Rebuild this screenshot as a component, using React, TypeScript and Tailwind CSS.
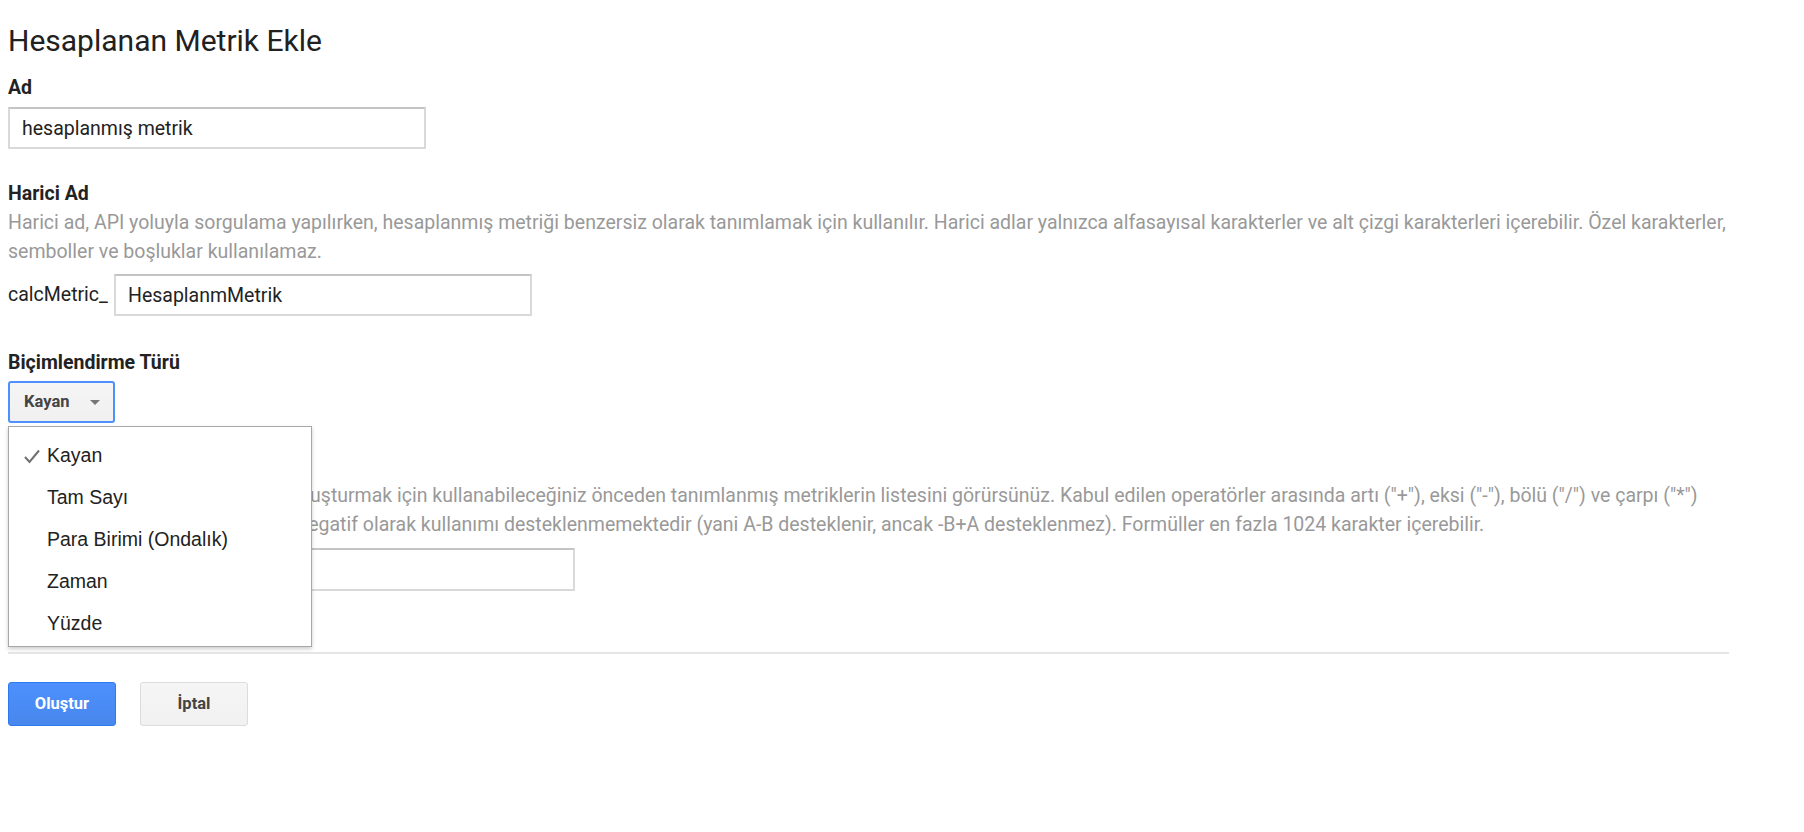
import React from "react";

const labelCls = "block text-[19.5px] leading-[29px] font-bold text-[#222]";
const helpCls = "text-[19.5px] leading-[29px] text-[#999] whitespace-nowrap";
const inputCls =
  "h-[42px] border-2 border-[#d9d9d9] border-t-[#c4c4c4] bg-white px-[12px] text-[19.5px] text-[#222] outline-none";

const formatOptions = ["Kayan", "Tam Sayı", "Para Birimi (Ondalık)", "Zaman", "Yüzde"];

function CheckMark() {
  return (
    <svg width="16" height="15" viewBox="0 0 16 15" className="shrink-0">
      <path d="M1 8 L5.5 13 L15 1.5" fill="none" stroke="#707070" strokeWidth="2" />
    </svg>
  );
}

function FormatMenu() {
  return (
    <div className="absolute left-0 top-[45px] z-10 w-[304px] border-[1.5px] border-[#a8a8a8] bg-white pt-[8px] pb-[1px] shadow-[0_2px_4px_rgba(0,0,0,0.2)] font-['Liberation_Sans',Arial,sans-serif]">
      {formatOptions.map((opt, i) => (
        <div key={opt} className="flex h-[42px] items-center text-[19.5px] text-[#222]">
          <div className="flex w-[38px] justify-end pr-[7px]">{i === 0 && <CheckMark />}</div>
          <span>{opt}</span>
        </div>
      ))}
    </div>
  );
}

function FormatSelect() {
  return (
    <div className="relative mt-[4px] w-[107px]">
      <button className="flex h-[42px] w-[107px] items-center rounded-[3px] border-2 border-[#4d90fe] bg-gradient-to-b from-[#f5f5f5] to-[#f0f0f0] pl-[14px] text-[16.5px] font-bold text-[#444]">
        Kayan
        <svg width="10" height="5" viewBox="0 0 10 5" className="ml-[21px]">
          <path d="M0 0 L10 0 L5 5 Z" fill="#777" />
        </svg>
      </button>
      <FormatMenu />
    </div>
  );
}

export default function App() {
  return (
    <div className="min-h-[832px] bg-white px-2 font-['Roboto',Arial,sans-serif] text-[#222]">
      <div className="w-[1721px]">
        <h1 className="pt-[23px] text-[30px] leading-[36px] font-normal text-[#212121]">
          Hesaplanan Metrik Ekle
        </h1>

        <div className="mt-[14px]">
          <label className={labelCls}>Ad</label>
          <input className={`mt-[5px] w-[418px] ${inputCls}`} defaultValue="hesaplanmış metrik" />
        </div>

        <div className="mt-[30px]">
          <label className={labelCls}>Harici Ad</label>
          <p className={helpCls}>
            Harici ad, API yoluyla sorgulama yapılırken, hesaplanmış metriği benzersiz olarak tanımlamak için
            kullanılır. Harici adlar yalnızca alfasayısal karakterler ve alt çizgi karakterleri içerebilir. Özel
            karakterler,
            <br />
            semboller ve boşluklar kullanılamaz.
          </p>
          <div className="mt-[8px] flex items-center">
            <span className="w-[106px] text-[19.5px] text-[#222]">calcMetric_</span>
            <input className={`w-[418px] ${inputCls}`} defaultValue="HesaplanmMetrik" />
          </div>
        </div>

        <div className="mt-[32px]">
          <label className={labelCls}>Biçimlendirme Türü</label>
          <FormatSelect />
        </div>

        <div className="mt-[29px]">
          <label className={labelCls}>Formül</label>
          <p className={helpCls}>
            Yazmaya başladığınızda formülü oluşturmak için kullanabileceğiniz önceden tanımlanmış metriklerin
            listesini görürsünüz. Kabul edilen operatörler arasında artı ("+"), eksi ("-"), bölü ("/") ve çarpı ("*")
            <br />
            bulunmaktadır. Ayrıca metriklerin negatif olarak kullanımı desteklenmemektedir (yani A-B desteklenir, ancak
            -B+A desteklenmez). Formüller en fazla 1024 karakter içerebilir.
          </p>
          <input className={`mt-[9px] w-[567px] h-[43px] ${inputCls}`} defaultValue="" />
        </div>

        <div className="mt-[61px] h-[2px] bg-[#e5e5e5]" />

        <div className="mt-[28px] flex gap-[24px]">
          <button className="h-[44px] w-[108px] rounded-[3px] border-[1.5px] border-[#3079ed] bg-gradient-to-b from-[#4d90fe] to-[#4787ed] text-[16.5px] font-bold text-white">
            Oluştur
          </button>
          <button className="h-[44px] w-[108px] rounded-[3px] border-[1.5px] border-[#dcdcdc] bg-gradient-to-b from-[#f5f5f5] to-[#f1f1f1] text-[16.5px] font-bold text-[#444]">
            İptal
          </button>
        </div>
      </div>
    </div>
  );
}
